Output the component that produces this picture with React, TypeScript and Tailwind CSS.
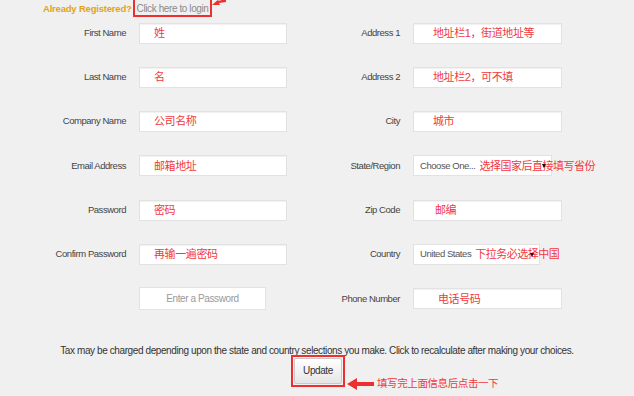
const font = { fontFamily: '"Liberation Sans", Arial, "Noto Sans CJK SC", sans-serif' };

const Label = ({ text, width }: { text: string; width: string }) => (
  <div
    className={`${width} shrink-0 text-right text-[9.5px] tracking-[-0.45px] text-[#444]`}
  >
    {text}
  </div>
);

const Field = ({
  value,
  width,
  pad = "pl-[14px]",
}: { value: string; width: string; pad?: string }) => (
  <div
    className={`${width} h-[21px] shrink-0 flex items-center ${pad} bg-white border border-[#e2e2e2] shadow-[inset_0_1px_1px_rgba(0,0,0,0.06)] text-[11px] tracking-[-0.4px] text-[#f0393f]`}
  >
    {value}
  </div>
);

const SelectField = ({
  value,
  note,
  width,
}: { value: string; note: string; width: string }) => (
  <div
    className={`${width} relative h-[21px] shrink-0 flex items-center pl-[6px] bg-white border border-[#e2e2e2] whitespace-nowrap`}
  >
    <span className="text-[9.5px] tracking-[-0.45px] text-[#555] mr-[4px]">{value}</span>
    <span className="text-[11px] tracking-[-0.5px] text-[#f0393f]">{note}</span>
    <span className="absolute right-[5px] top-[8px] w-0 h-0 border-l-[2.5px] border-r-[2.5px] border-t-[4px] border-l-transparent border-r-transparent border-t-[#111]" />
  </div>
);

const Row = ({ children }: { children: React.ReactNode }) => (
  <div className="flex items-center h-[22px]">{children}</div>
);

export default function App() {
  return (
    <div className="w-[634px] h-[396px] overflow-hidden bg-[#f0f0f0] relative" style={font}>
      <div className="flex items-start h-[17px] pl-[43px]">
        <span className="mt-[2px] text-[9.5px] font-bold tracking-[-0.2px] text-[#e3a21a]">
          Already Registered?
        </span>
        <span className="relative -mt-[2px] ml-[1px] h-[19px] px-[2px] pt-[3px] border-2 border-[#ee2f2f] text-[10px] tracking-[-0.4px] text-[#8a8a8a] leading-[12px]">
          Click here to login
          <svg className="absolute -right-[16px] -top-[1px]" width="14" height="8" viewBox="0 0 14 8">
            <polygon points="0,6 7,0 6,2 14,0 14,3 7,4 8,6" fill="#ee2f2f" />
          </svg>
        </span>
      </div>

      <div className="mt-[5px] flex flex-col gap-[22.3px]">
        <Row>
          <Label text="First Name" width="w-[126px]" />
          <div className="ml-[13px]"><Field value="姓" width="w-[148px]" /></div>
          <Label text="Address 1" width="w-[113px]" />
          <div className="ml-[13px]"><Field value="地址栏1，街道地址等" width="w-[149px]" pad="pl-[19px]" /></div>
        </Row>
        <Row>
          <Label text="Last Name" width="w-[126px]" />
          <div className="ml-[13px]"><Field value="名" width="w-[148px]" /></div>
          <Label text="Address 2" width="w-[113px]" />
          <div className="ml-[13px]"><Field value="地址栏2，可不填" width="w-[149px]" pad="pl-[19px]" /></div>
        </Row>
        <Row>
          <Label text="Company Name" width="w-[126px]" />
          <div className="ml-[13px]"><Field value="公司名称" width="w-[148px]" /></div>
          <Label text="City" width="w-[113px]" />
          <div className="ml-[13px]"><Field value="城市" width="w-[149px]" pad="pl-[19px]" /></div>
        </Row>
        <Row>
          <Label text="Email Address" width="w-[126px]" />
          <div className="ml-[13px]"><Field value="邮箱地址" width="w-[148px]" /></div>
          <Label text="State/Region" width="w-[113px]" />
          <div className="ml-[13px]"><SelectField value="Choose One..." note="选择国家后直接填写省份" width="w-[139px]" /></div>
        </Row>
        <Row>
          <Label text="Password" width="w-[126px]" />
          <div className="ml-[13px]"><Field value="密码" width="w-[148px]" /></div>
          <Label text="Zip Code" width="w-[113px]" />
          <div className="ml-[13px]"><Field value="邮编" width="w-[149px]" pad="pl-[21px]" /></div>
        </Row>
        <Row>
          <Label text="Confirm Password" width="w-[126px]" />
          <div className="ml-[13px]"><Field value="再输一遍密码" width="w-[148px]" /></div>
          <Label text="Country" width="w-[113px]" />
          <div className="ml-[13px]"><SelectField value="United States" note="下拉务必选择中国" width="w-[127px]" /></div>
        </Row>
        <Row>
          <div className="w-[126px] shrink-0" />
          <div className="ml-[13px] w-[127px] h-[23px] shrink-0 flex items-center justify-center bg-white border border-[#e2e2e2] text-[10px] tracking-[-0.4px] text-[#9a9a9a]">
            Enter a Password
          </div>
          <div className="w-[134px] shrink-0 text-right text-[9.5px] tracking-[-0.45px] text-[#444]">
            Phone Number
          </div>
          <div className="ml-[13px]"><Field value="电话号码" width="w-[149px]" pad="pl-[24px]" /></div>
        </Row>
      </div>

      <div className="mt-[33px] text-center text-[10px] tracking-[-0.4px] text-[#333]">
        Tax may be charged depending upon the state and country selections you make. Click to recalculate after making your choices.
      </div>

      <div className="relative z-10 flex items-center pl-[291px] -mt-[8px]">
        <div className="p-[1px] border-2 border-[#ee2f2f]">
          <div className="w-[48px] h-[26px] flex items-center justify-center border border-[#c9c9c9] rounded-[2px] bg-gradient-to-b from-white to-[#e6e6e6] text-[10px] tracking-[-0.4px] text-[#333]">
            Update
          </div>
        </div>
        <div className="flex items-center mt-[26px] ml-[2px]">
          <svg width="27" height="12" viewBox="0 0 27 12">
            <polygon points="0,6 10,0 10,4 27,4 27,8 10,8 10,12" fill="#ee2f2f" />
          </svg>
          <span className="ml-[3px] text-[10.5px] tracking-[-0.4px] text-[#f0393f]">
            填写完上面信息后点击一下
          </span>
        </div>
      </div>
    </div>
  );
}
